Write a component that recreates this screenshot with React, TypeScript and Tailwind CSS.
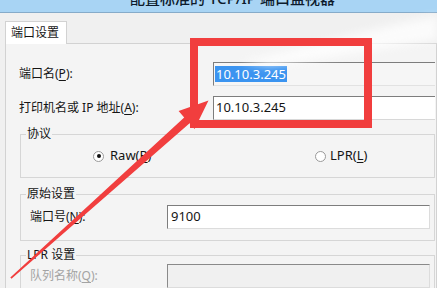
import React from "react";

const U = ({ children }: { children: React.ReactNode }) => (
  <span className="underline underline-offset-[2px] decoration-[1px]">{children}</span>
);

function Radio({ checked }: { checked?: boolean }) {
  return (
    <span className="w-[11px] h-[11px] rounded-full border border-[#9a9a9a] bg-white flex items-center justify-center shrink-0">
      {checked ? <span className="w-[4px] h-[4px] rounded-full bg-[#111]" /> : null}
    </span>
  );
}

export default function App() {
  return (
    <div className="relative w-[437px] h-[288px] overflow-hidden bg-[#f0f0f0] font-['Noto_Sans','Noto_Sans_CJK_SC',sans-serif] text-[12px] text-[#151515]">
      {/* title bar */}
      <div className="h-[13px] bg-[#a8d4f4] border-b border-[#86abc9] overflow-hidden flex justify-center">
        <div className="pl-[28px] -mt-[10px] text-[15px] leading-[16px] font-medium text-[#0d1b2c] whitespace-nowrap">
          配置标准的 TCP/IP 端口监视器
        </div>
      </div>

      <div className="pl-[5px] pt-[8px]">
        {/* tabs */}
        <div className="flex">
          <div className="w-[62px] h-[23px] bg-white border border-b-0 border-[#d2d2d2] pl-[5px] leading-[22px]">
            端口设置
          </div>
          <div className="flex-1 border-b border-[#d2d2d2]" />
        </div>

        {/* panel */}
        <div className="h-[260px] bg-[#f4f4f4] border-l border-r border-[#d2d2d2] pl-[13px] pr-[1px] pt-[18px]">
          <div className="flex items-center h-[24px]">
            <div className="w-[194px]">
              端口名(<U>P</U>):
            </div>
            <div className="flex-1 h-full bg-[#f6f6f6] border-t border-l border-[#7d7d7d] border-b border-r-0 border-b-[#e2e2e2] flex items-center pl-[1px] text-[13px]">
              <span className="bg-[#3b94f0] text-white px-[1px] leading-[16px]">10.10.3.245</span>
            </div>
          </div>
          <div className="flex items-center h-[24px] mt-[10px]">
            <div className="w-[194px]">
              打印机名或 IP 地址(<U>A</U>):
            </div>
            <div className="flex-1 h-full bg-white border-t border-l border-[#7d7d7d] border-b border-r-0 border-b-[#d8d8d8] flex items-center pl-[2px] text-[13px]">
              10.10.3.245
            </div>
          </div>

          {/* 协议 */}
          <fieldset className="mt-[7px] ml-[1px] h-[51px] border border-[#d6d6d6]">
            <legend className="ml-[5px] px-[1px] leading-[14px]">协议</legend>
            <div className="h-[30px] flex items-center pl-[72px]">
              <div className="w-[222px] flex items-center gap-[6px]">
                <Radio checked />
                <span className="text-[13px]">
                  Raw(<U>R</U>)
                </span>
              </div>
              <div className="flex items-center gap-[4px]">
                <Radio />
                <span className="text-[13px]">
                  LPR(<U>L</U>)
                </span>
              </div>
            </div>
          </fieldset>

          {/* 原始设置 */}
          <fieldset className="mt-[9px] ml-[1px] h-[54px] border border-[#d6d6d6] pl-[9px] pr-[4px]">
            <legend className="-ml-[4px] px-[1px] leading-[14px]">原始设置</legend>
            <div className="flex items-center h-[24px] mt-[4px]">
              <div className="w-[137px]">
                端口号(<U>N</U>):
              </div>
              <div className="flex-1 h-full bg-white border-t border-l border-[#7d7d7d] border-b border-r border-b-[#dcdcdc] border-r-[#dcdcdc] flex items-center pl-[3px] text-[13px]">
                9100
              </div>
            </div>
          </fieldset>

          {/* LPR 设置 */}
          <fieldset className="mt-[7px] ml-[1px] h-[54px] border border-[#d6d6d6] pl-[9px] pr-[4px]">
            <legend className="-ml-[4px] px-[1px] leading-[14px]">LPR 设置</legend>
            <div className="flex items-center h-[24px] mt-[2px]">
              <div className="w-[137px] text-[#a3a3a3]">
                队列名称(<U>Q</U>):
              </div>
              <div className="flex-1 h-full bg-[#f0f0f0] border-t border-l border-[#8a8a8a] border-b border-r border-b-[#dcdcdc] border-r-[#dcdcdc]" />
            </div>
          </fieldset>
        </div>
      </div>

      {/* overlays: watermark + annotation */}
      <svg className="absolute inset-0 pointer-events-none" width={437} height={288} viewBox="0 0 437 288">
        <defs>
          <filter id="blur" x="-20%" y="-50%" width="140%" height="200%">
            <feGaussianBlur stdDeviation="4" />
          </filter>
        </defs>
        <path d="M240 62 C 300 50, 360 30, 437 16 L 437 40 C 380 48, 320 60, 270 66 Z" fill="#ffffff" opacity="0.75" filter="url(#blur)" />
        <rect x={194} y={42} width={174} height={82} fill="none" stroke="#f13e3e" strokeWidth={8} />
        <polygon
          points="10.3,277.6 184.2,117.6 178.6,111 208.5,100.5 194.6,129 189.6,123.2 11.5,278.8"
          fill="#f13e3e"
        />
      </svg>
    </div>
  );
}
